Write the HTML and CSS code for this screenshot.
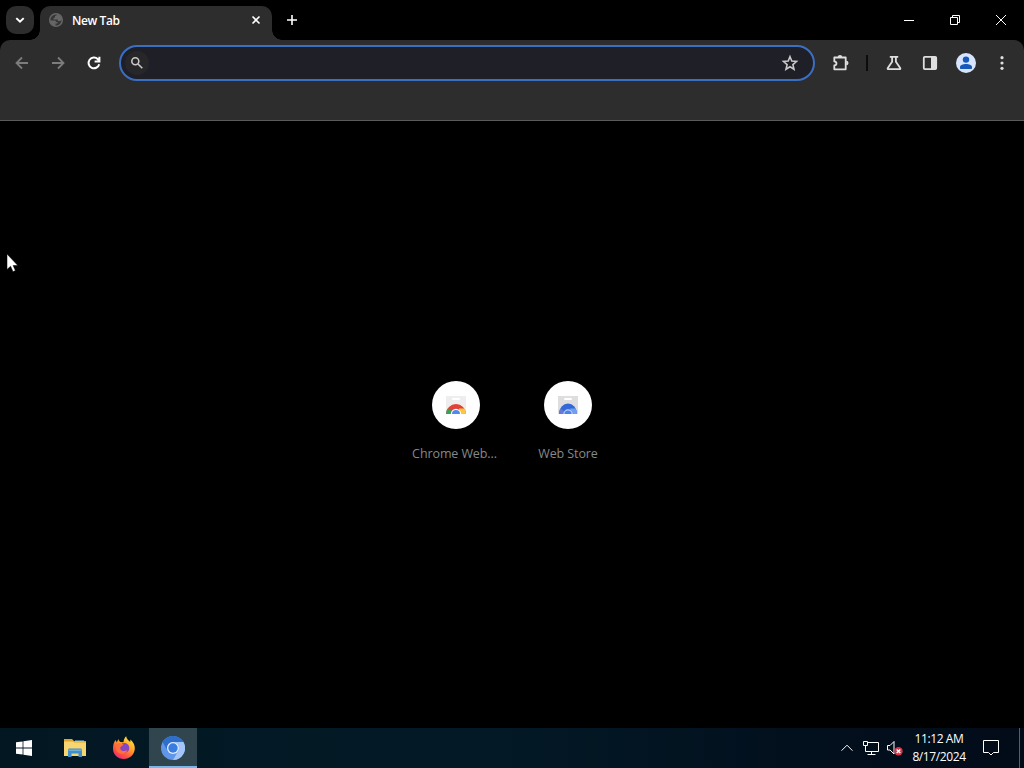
FILE: index.html
```html
<!DOCTYPE html>
<html lang="en">

<head>
    <meta charset="UTF-8">
    <meta name="viewport" content="width=device-width, initial-scale=1.0">
    <title>New Tab</title>
    <link rel="stylesheet" href="styles.css">
</head>

<body>

    <div class="desktop">
        <header class="tab-strip">
            <button class="tab-search" aria-label="Search tabs">
                <svg width="28" height="28" viewBox="0 0 28 28"><path d="M10.3 12.1l3.7 3.6 3.7-3.6" class="line bold"/></svg>
            </button>
            <div class="tab">
                <svg width="16" height="16" viewBox="0 0 16 16">
                    <circle cx="8" cy="8" r="6.3" fill="#363636" stroke="#666" stroke-width="1.5"/>
                    <path d="M2 8.500h4.500c1 0 1.500.7 1.500 1.500h1.500v1.500H7.500V14C4 13.500 2 11 2 8.500zM8.500 2.500v1L7 4v1.500L5.500 6v1.500h4.300V9h2.700L14 7.500C13.500 4.500 11.500 2.500 8.500 2.500z" fill="#666"/>
                </svg>
                <span class="tab-title">New Tab</span>
                <svg class="tab-close" width="16" height="16" viewBox="0 0 16 16"><path d="M4.500 4.500l7 7M11.500 4.500l-7 7" class="line"/></svg>
            </div>
            <button class="new-tab" aria-label="New tab">
                <svg width="28" height="28" viewBox="0 0 28 28"><path d="M14 9v10M9 14h10" class="line"/></svg>
            </button>
            <div class="window-buttons">
                <svg width="46" height="40" viewBox="0 0 46 40"><path d="M18 20.500h10" class="thin"/></svg>
                <svg width="46" height="40" viewBox="0 0 46 40"><path d="M18.500 17.500h7v7h-7zM20.500 17.500v-2h7v7h-2" class="thin"/></svg>
                <svg width="46" height="40" viewBox="0 0 46 40"><path d="M18 15l10 10M28 15L18 25" class="thin"/></svg>
            </div>
        </header>

        <div class="toolbar">
            <svg class="tool disabled" width="36" height="36" viewBox="0 0 36 36"><path d="M24 18H12.800M18 12.500L12.500 18l5.500 5.500" class="line"/></svg>
            <svg class="tool disabled" width="36" height="36" viewBox="0 0 36 36"><path d="M12 18h11.200M18 12.500l5.500 5.500-5.500 5.500" class="line"/></svg>
            <svg class="tool" width="36" height="36" viewBox="0 0 36 36"><path d="M23.200 19.200a5.400 5.400 0 1 1-1.300-5l1.500 1.600M23.400 11.800v4.600h-4.800" class="line bold"/></svg>
            <div class="omnibox">
                <span class="omnibox-icon">
                    <svg width="16" height="16" viewBox="0 0 16 16"><circle cx="6.300" cy="6.200" r="3.500" class="line soft"/><path d="M9 9l4.300 4.300" class="line soft"/></svg>
                </span>
                <svg width="20" height="20" viewBox="0 0 20 20"><path d="M10 3.700l1.800 4.400 4.700.4-3.600 3.100 1.100 4.600-4-2.500-4 2.500 1.100-4.600-3.600-3.100 4.700-.4z" class="line soft"/></svg>
            </div>
            <svg class="tool" width="36" height="36" viewBox="0 0 36 36">
                <path d="M11.300 12.500h11.400v11.800H11.300v-3.900c2.900-.5 2.900-3.500 0-4z" class="line" stroke-linejoin="round"/>
                <path d="M14.700 12.300a2.300 2.300 0 0 1 4.600 0zM23.200 15.700a2.300 2.300 0 0 1 0 4.600z" fill="#dedede"/>
            </svg>
            <span class="separator"></span>
            <svg class="tool" width="36" height="36" viewBox="0 0 36 36"><path d="M13.800 11.800h8.400M16.100 11.800v5l-4.300 6.100c-.4.700-.1 1.300.6 1.300h11.200c.7 0 1-.6.600-1.300l-4.300-6.100v-5" class="line"/></svg>
            <svg class="tool" width="36" height="36" viewBox="0 0 36 36"><rect x="11.800" y="11.900" width="12.400" height="12.200" rx="1" class="line"/><path d="M19 12h5.500v12H19z" fill="#dedede"/></svg>
            <svg class="tool" width="36" height="36" viewBox="0 0 36 36"><circle cx="18" cy="18" r="10" fill="#d7e5fc"/><circle cx="18" cy="14.600" r="3.200" fill="#1858ba"/><path d="M12 23v-1c0-4 12-4 12 0v1c0 .6-.4 1-1 1H13c-.6 0-1-.4-1-1z" fill="#1858ba"/></svg>
            <svg class="tool" width="36" height="36" viewBox="0 0 36 36"><g fill="#dedede"><circle cx="18" cy="12.700" r="1.600"/><circle cx="18" cy="18" r="1.600"/><circle cx="18" cy="23.300" r="1.600"/></g></svg>
        </div>
        <div class="bookmarks-bar"></div>

        <main class="page">
            <div class="shortcut">
                <span class="shortcut-icon">
                    <svg width="24" height="24" viewBox="0 0 24 24">
                        <path d="M2 3h20v18H2z" fill="#eee"/>
                        <rect x="8" y="5" width="8" height="2" rx="1" fill="#fff"/>
                        <path d="M2 21a10 10 0 0 1 20 0z" fill="#e04335"/>
                        <path d="M2 21a10 10 0 0 1 1.700-5.600L8 18v3z" fill="#35a455"/>
                        <path d="M15 15.500h5.300A10 10 0 0 1 22 21h-6z" fill="#fac83c"/>
                        <path d="M6.800 21a5.200 5.200 0 0 1 10.400 0z" fill="#fff"/>
                        <path d="M8 21a4 4 0 0 1 8 0z" fill="#4c8bed"/>
                    </svg>
                </span>
                <span class="shortcut-title">Chrome Web...</span>
            </div>
            <div class="shortcut">
                <span class="shortcut-icon">
                    <svg width="24" height="24" viewBox="0 0 24 24">
                        <path d="M2 3h20v18H2z" fill="#dedede"/>
                        <rect x="8" y="5" width="8" height="2" rx="1" fill="#fff"/>
                        <path d="M3 21a9 10.500 0 0 1 18 0z" fill="#3268d8"/>
                        <path d="M3 21a9 10.500 0 0 1 1.500-5.500L8 18v3z" fill="#6679d9"/>
                        <path d="M14 15.500h5.500A9 10.500 0 0 1 21 21h-5z" fill="#6f9fee"/>
                        <path d="M7.300 21a4.700 4.700 0 0 1 9.400 0z" fill="#b4d0fa"/>
                        <path d="M8.500 21a3.500 3.500 0 0 1 7 0z" fill="#4c83e8"/>
                    </svg>
                </span>
                <span class="shortcut-title">Web Store</span>
            </div>
        </main>

        <footer class="taskbar">
            <div class="task start">
                <svg width="16" height="16" viewBox="0 0 16 16"><path d="M0 2.300l6.600-.9v6.200H0zM7.400 1.200L16 0v7.600H7.400zM0 8.400h6.600v6.200L0 13.700zM7.400 8.400H16V16l-8.600-1.200z" fill="#fff"/></svg>
            </div>
            <div class="task">
                <svg width="24" height="24" viewBox="0 0 24 24">
                    <path d="M1 3h8l2 2h12v5H1z" fill="#dfa52e"/>
                    <path d="M1 5.500h9l1.500 1H23V20H1z" fill="#f7d571"/>
                    <path d="M12 4.500h9V6h-9z" fill="#8fd1df"/>
                    <path d="M5 21v-6.500c0-1.500.5-2 2-2h10c1.500 0 2 .5 2 2V21h-3.500v-3.500h-7V21z" fill="#3f8fca"/>
                    <path d="M5.500 13.500h13V15h-13z" fill="#73b0d8"/>
                </svg>
            </div>
            <div class="task">
                <svg width="24" height="24" viewBox="0 0 24 24">
                    <defs>
                        <linearGradient id="fire" x1=".85" y1="0" x2=".2" y2="1">
                            <stop offset="0" stop-color="#fff04b"/>
                            <stop offset=".4" stop-color="#ffa52c"/>
                            <stop offset=".72" stop-color="#ff5340"/>
                            <stop offset="1" stop-color="#ed247e"/>
                        </linearGradient>
                    </defs>
                    <path d="M1 12.500c0-4 1-6.500 2.700-8.500l1 2.500L6.500 3c.2 1.500.8 2.300 2 3l3 .3C11.700 3.500 12.700 1.500 14.200.3c.3 3 2.300 4 4 5.700l.3-2.500c3 3 4.600 5.800 4.300 9.500-.5 5.700-5.200 10-11 10C5.600 23 1 18.500 1 12.500z" fill="url(#fire)"/>
                    <circle cx="12.300" cy="12" r="5" fill="#8845c4"/>
                    <path d="M3.500 8.500c3-2 5.500-1.500 8 .2-1 1.500-3 1.300-3.300 3-.4 3.200 3.600 4.300 7.300 2.600-1.500 4-8 4.700-10.500 1.200C3.800 13.500 3.500 10.500 3.500 8.500z" fill="#ff7139"/>
                </svg>
            </div>
            <div class="task active">
                <svg width="24" height="24" viewBox="0 0 24 24">
                    <circle cx="12" cy="12" r="12" fill="#5f96e9"/>
                    <path d="M1.600 6a12 12 0 0 1 20.800 0H12a6 6 0 0 0-5.200 9z" fill="#2f6fcc"/>
                    <path d="M22.400 6A12 12 0 0 1 12 24l5.200-9A6 6 0 0 0 12 6z" fill="#a3c5f7"/>
                    <circle cx="12" cy="12" r="6" fill="#e1edfd"/>
                    <circle cx="12" cy="12" r="4.700" fill="#397de0"/>
                </svg>
            </div>

            <div class="tray">
                <svg width="24" height="24" viewBox="0 0 24 24"><path d="M6.500 14.700L12 9.200l5.500 5.500" class="thin"/></svg>
                <svg width="24" height="24" viewBox="0 0 24 24"><path d="M8.500 6.500h11v9h-13v-5M12.500 15.500v3M8.500 18.500h8M4.500 5.500h4v4h-4zM6.500 9.500v2" class="thin"/></svg>
                <svg width="24" height="24" viewBox="0 0 24 24">
                    <path d="M4.500 9.500H7l4-4v12.500l-4-4H4.500z" class="thin"/>
                    <circle cx="15.500" cy="15.200" r="4.200" fill="#d83347"/>
                    <path d="M13.700 13.400l3.600 3.600M17.300 13.400L13.700 17" class="thin cross"/>
                </svg>
                <div class="clock">
                    <span>11:12 AM</span>
                    <span>8/17/2024</span>
                </div>
                <svg class="notifications" width="24" height="24" viewBox="0 0 24 24"><path d="M4.500 4.500h15v12h-5L12 19l-2.500-2.500h-5z" class="thin"/></svg>
                <span class="show-desktop"></span>
            </div>
        </footer>

        <!-- mouse pointer -->
        <svg class="pointer" width="14" height="20" viewBox="0 0 14 20"><path d="M1 1v15.500l3.600-3.200 2.400 5.400 2.400-1.100L7.100 12.500h4.700z" fill="#fff" stroke="#000" stroke-width=".5"/></svg>
    </div>

</body>

</html>
```
FILE: styles.css
```css
* {
    box-sizing: border-box;
}

body {
    margin: 0;
    background: #000;
    font-family: "Open Sans", "Noto Sans", sans-serif;
    font-size: 12px;
    color: #fff;
}

svg {
    display: block;
    flex: none;
}

button {
    padding: 0;
    border: 0;
    background: none;
}

.desktop {
    position: relative;
    display: flex;
    flex-direction: column;
    height: 100vh;
    overflow: hidden;
}

.line {
    fill: none;
    stroke: #dedede;
    stroke-width: 1.8;
}

.bold {
    stroke: #fff;
    stroke-width: 2;
}

.soft {
    stroke: #c9c9c9;
    stroke-width: 1.6;
}

.thin {
    fill: none;
    stroke: #fff;
    stroke-width: 1;
}

.cross {
    stroke-width: 1.4;
}

/* Tabs */

.tab-strip {
    display: flex;
    height: 40px;
    padding-left: 6px;
}

.tab-search {
    width: 28px;
    height: 28px;
    margin: 6px 6px 0 0;
    border-radius: 10px;
    background: #2d2d2d;
}

.tab {
    position: relative;
    display: flex;
    align-items: center;
    width: 232px;
    height: 34px;
    margin-top: 6px;
    padding: 0 8px 6px;
    border-radius: 10px 10px 0 0;
    background: #2d2d2d;
}

.tab::before,
.tab::after {
    content: "";
    position: absolute;
    bottom: 0;
    width: 10px;
    height: 10px;
}

.tab::before {
    left: -10px;
    background: radial-gradient(circle at 0 0, transparent 9.5px, #2d2d2d 10px);
}

.tab::after {
    right: -10px;
    background: radial-gradient(circle at 100% 0, transparent 9.5px, #2d2d2d 10px);
}

.tab-title {
    margin-left: 8px;
    padding-top: 1px;
    font-weight: 600;
    line-height: 16px;
    letter-spacing: -0.4px;
}

.tab-close {
    margin-left: auto;
}

.tab .tab-close .line,
.new-tab .line {
    stroke: #fff;
    stroke-width: 1.6;
}

.new-tab {
    width: 28px;
    height: 28px;
    margin: 6px 0 0 6px;
}

.window-buttons {
    display: flex;
    margin-left: auto;
}

/* Toolbar */

.toolbar {
    display: flex;
    align-items: center;
    height: 46px;
    padding: 0 4px;
    border-radius: 10px 10px 0 0;
    background: #2d2d2d;
}

.disabled .line {
    stroke: #7c7c7c;
}

.omnibox {
    display: flex;
    flex: 1;
    align-items: center;
    justify-content: space-between;
    height: 36px;
    margin: 0 8px 0 7px;
    padding: 0 13px 0 4px;
    border: 2px solid #3b6fc2;
    border-radius: 18px;
    background: #1f1f27;
}

.omnibox-icon {
    display: flex;
    align-items: center;
    justify-content: center;
    width: 24px;
    height: 24px;
    border-radius: 50%;
    background: #27272a;
}

.separator {
    width: 2px;
    height: 16px;
    margin: 0 8px 0 7px;
    background: #0c0c0c;
}

.bookmarks-bar {
    height: 35px;
    border-bottom: 1px solid #5b5b5b;
    background: #2d2d2d;
}

/* New tab page */

.page {
    display: flex;
    flex: 1;
    justify-content: center;
    padding-top: 260px;
}

.shortcut {
    display: flex;
    flex-direction: column;
    align-items: center;
    width: 112px;
}

.shortcut-icon {
    display: flex;
    align-items: center;
    justify-content: center;
    width: 48px;
    height: 48px;
    border-radius: 50%;
    background: #fff;
}

.shortcut-title {
    width: 88px;
    margin-top: 15px;
    font-size: 12.5px;
    line-height: 20px;
    letter-spacing: -0.1px;
    text-align: center;
    color: #85888b;
}

.shortcut:first-child .shortcut-title {
    padding-right: 3px;
}

/* Taskbar */

.taskbar {
    display: flex;
    gap: 1px;
    height: 40px;
    background: linear-gradient(90deg, #021722, #031a26 45%, #020f1d 80%, #020c19);
}

.task {
    display: flex;
    align-items: center;
    justify-content: center;
    width: 48px;
}

.start {
    margin-right: 2px;
}

.active {
    border-bottom: 2px solid #79b7eb;
    padding-top: 2px;
    background: #31454e;
}

.tray {
    display: flex;
    align-items: center;
    margin-left: auto;
}

.clock {
    display: flex;
    flex-direction: column;
    align-items: center;
    width: 64px;
    line-height: 18px;
    letter-spacing: -0.4px;
}

.notifications {
    margin: 0 16px 0 8px;
}

.show-desktop {
    width: 5px;
    height: 40px;
    border-left: 1px solid #53606a;
}

.pointer {
    position: absolute;
    top: 253px;
    left: 6px;
}
```
